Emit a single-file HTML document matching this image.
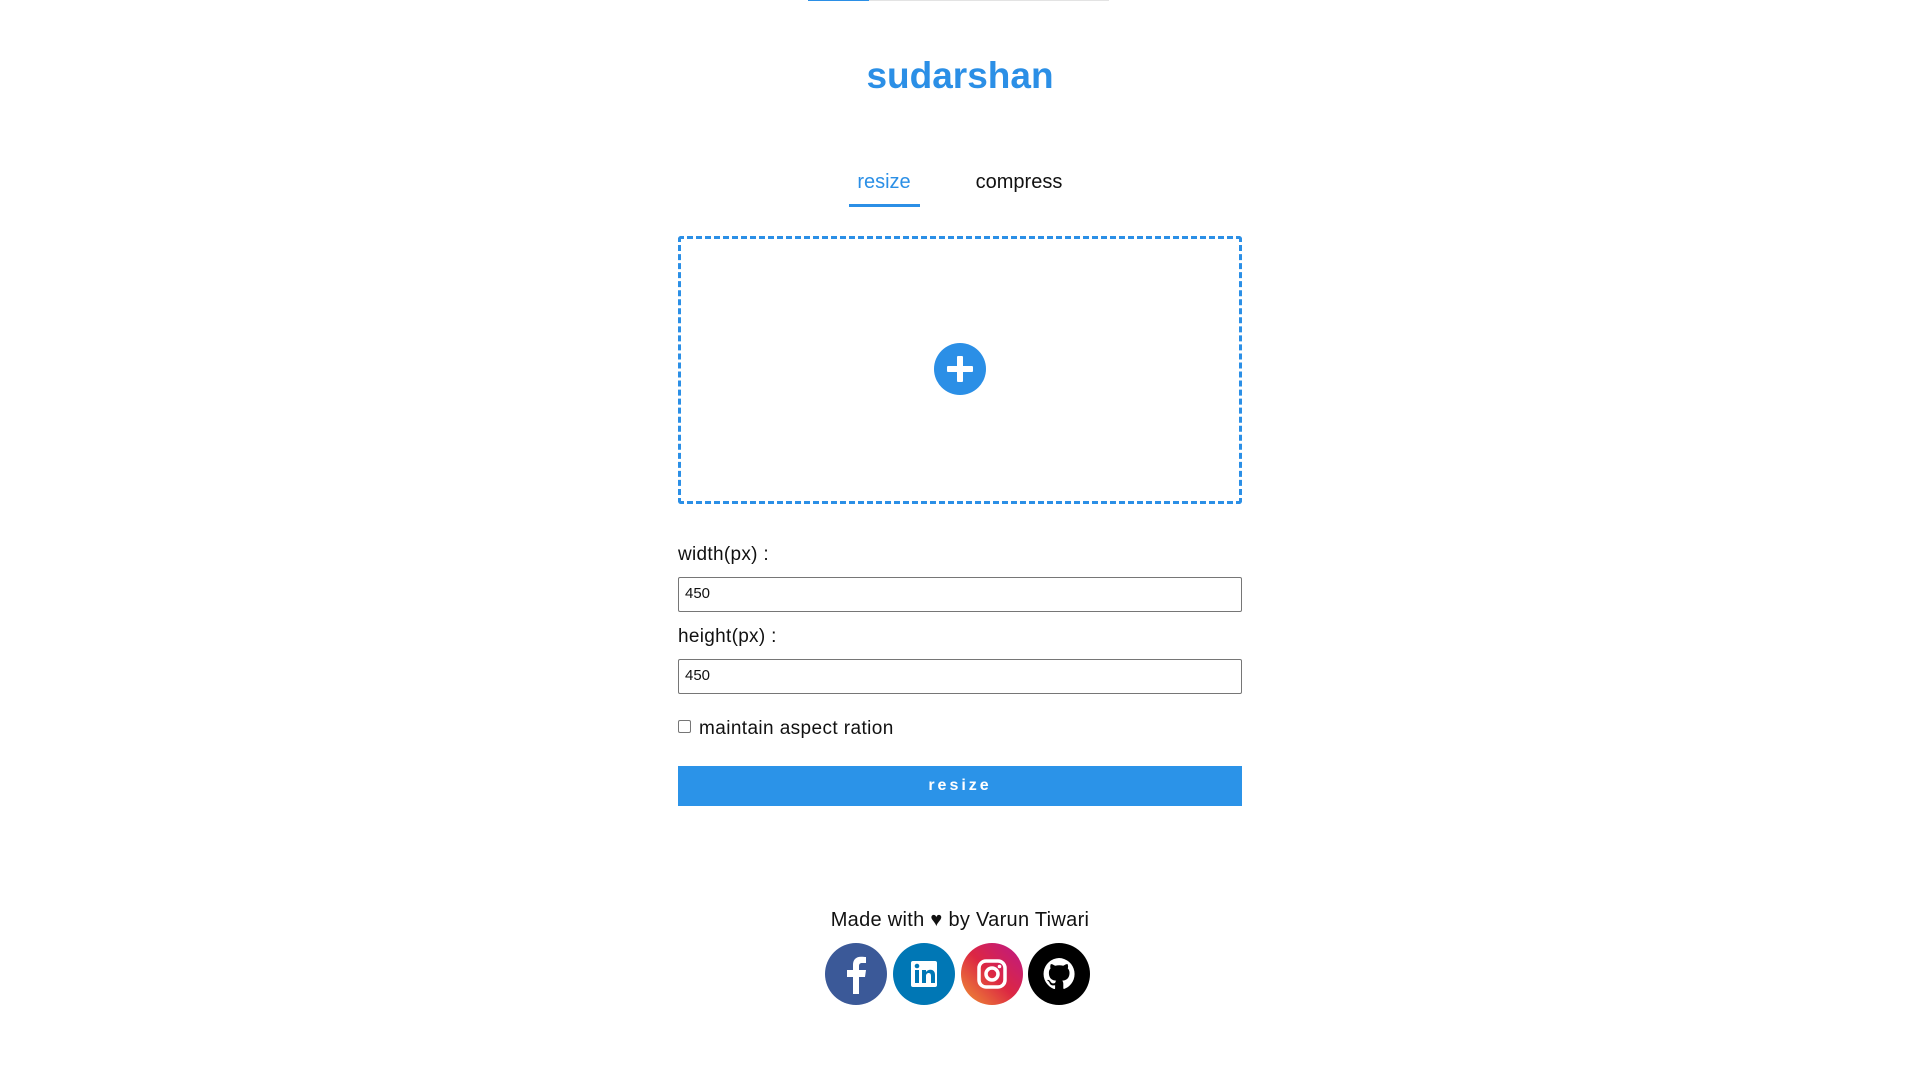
<!DOCTYPE html>
<html><head><meta charset="utf-8"><style>
*{box-sizing:border-box;margin:0;padding:0}
body{width:1920px;height:1080px;background:#fff;font-family:"Liberation Sans",sans-serif;position:relative;overflow:hidden;color:#111}
.a{position:absolute}
</style></head><body>
<div class="a" style="left:808px;top:0;width:301px;height:1px;background:#e3e3e3"></div>
<div class="a" style="left:808px;top:0;width:61px;height:1px;background:#2b8fe6"></div>
<div class="a" style="left:0;width:1920px;top:55px;text-align:center;font-size:37px;font-weight:bold;color:#2b8fe6">sudarshan</div>
<div class="a" style="left:834px;width:100px;top:171px;text-align:center;font-size:20px;color:#2b8fe6">resize</div>
<div class="a" style="left:849px;top:204px;width:71px;height:3px;background:#2b8fe6"></div>
<div class="a" style="left:959px;width:120px;top:171px;text-align:center;font-size:20px;color:#111">compress</div>
<div class="a" style="left:678px;top:236px;width:564px;height:268px;border:3px dashed #2b8fe6;border-radius:3px"></div>
<div class="a" style="left:934px;top:343px;width:52px;height:52px;border-radius:50%;background:#2b8fe6"></div>
<div class="a" style="left:947px;top:366px;width:26px;height:6px;background:#fff;border-radius:1px"></div>
<div class="a" style="left:957px;top:356px;width:6px;height:26px;background:#fff;border-radius:1px"></div>
<div class="a" style="left:678px;top:544px;font-size:19px;letter-spacing:0.3px">width(px) :</div>
<div class="a" style="left:678px;top:577px;width:564px;height:35px;border:1px solid #767676;border-radius:2px;font-size:15px;padding:7px 6px">450</div>
<div class="a" style="left:678px;top:626px;font-size:19px;letter-spacing:0.3px">height(px) :</div>
<div class="a" style="left:678px;top:659px;width:564px;height:35px;border:1px solid #767676;border-radius:2px;font-size:15px;padding:7px 6px">450</div>
<div class="a" style="left:678px;top:720px;width:13px;height:13px;border:1px solid #767676;border-radius:2px"></div>
<div class="a" style="left:699px;top:718px;font-size:19px;letter-spacing:0.4px">maintain aspect ration</div>
<div class="a" style="left:678px;top:766px;width:564px;height:40px;background:#2b93e8;color:#fff;font-weight:bold;font-size:16px;letter-spacing:3px;text-align:center;line-height:40px">resize</div>
<div class="a" style="left:0;width:1920px;top:909px;text-align:center;font-size:20px;letter-spacing:0.3px">Made with ♥ by Varun Tiwari</div>
<svg class="a" style="left:824px;top:942px" width="64" height="64" viewBox="0 0 64 64"><circle cx="32" cy="32" r="31" fill="#3b5998"/><path d="M35 52V35h6l1-7h-7v-4c0-2 1-3 3-3h4v-6c-1 0-3-.3-5-.3-5 0-8 3-8 8v5.3h-6v7h6v17z" fill="#fff"/></svg>
<svg class="a" style="left:892px;top:942px" width="64" height="64" viewBox="0 0 64 64"><circle cx="32" cy="32" r="31" fill="#0077b5"/><rect x="19" y="19" width="26" height="26" rx="2" fill="#fff"/><rect x="23" y="28" width="4" height="13" fill="#0077b5"/><circle cx="25" cy="24" r="2.3" fill="#0077b5"/><path d="M30 28h4v2c1-1.5 2.5-2.3 4.5-2.3 3 0 4.5 2 4.5 5.5V41h-4v-7c0-2-.7-3-2.2-3s-2.8 1-2.8 3v7h-4z" fill="#0077b5"/></svg>
<svg class="a" style="left:960px;top:942px" width="64" height="64" viewBox="0 0 64 64"><defs><linearGradient id="g" x1="0" y1="1" x2="1" y2="0"><stop offset="0" stop-color="#f09433"/><stop offset=".5" stop-color="#dc2743"/><stop offset="1" stop-color="#bc1888"/></linearGradient></defs><circle cx="32" cy="32" r="31" fill="url(#g)"/><rect x="19" y="19" width="26" height="26" rx="7" fill="none" stroke="#fff" stroke-width="3.5"/><circle cx="32" cy="32" r="6" fill="none" stroke="#fff" stroke-width="3.5"/><circle cx="39.5" cy="24.5" r="1.8" fill="#fff"/></svg>
<svg class="a" style="left:1027px;top:942px" width="64" height="64" viewBox="0 0 64 64"><circle cx="32" cy="32" r="31" fill="#000"/><path d="M32 16a16 16 0 0 0-5 31c.8.1 1.1-.3 1.1-.8v-3c-4.5 1-5.4-2-5.4-2-.7-1.8-1.8-2.3-1.8-2.3-1.5-1 .1-1 .1-1 1.6.1 2.5 1.7 2.5 1.7 1.4 2.5 3.8 1.8 4.7 1.3.1-1 .6-1.8 1-2.2-3.6-.4-7.3-1.8-7.3-8 0-1.8.6-3.2 1.7-4.3-.2-.4-.7-2 .2-4.3 0 0 1.3-.4 4.4 1.7a15 15 0 0 1 8 0c3-2.1 4.4-1.7 4.4-1.700.9 2.3.3 3.9.2 4.3 1 1.1 1.7 2.5 1.7 4.3 0 6.2-3.8 7.6-7.3 8 .6.5 1.1 1.5 1.1 3v4.4c0 .5.3.9 1.1.8A16 16 0 0 0 32 16z" fill="#fff"/></svg>
</body></html>
